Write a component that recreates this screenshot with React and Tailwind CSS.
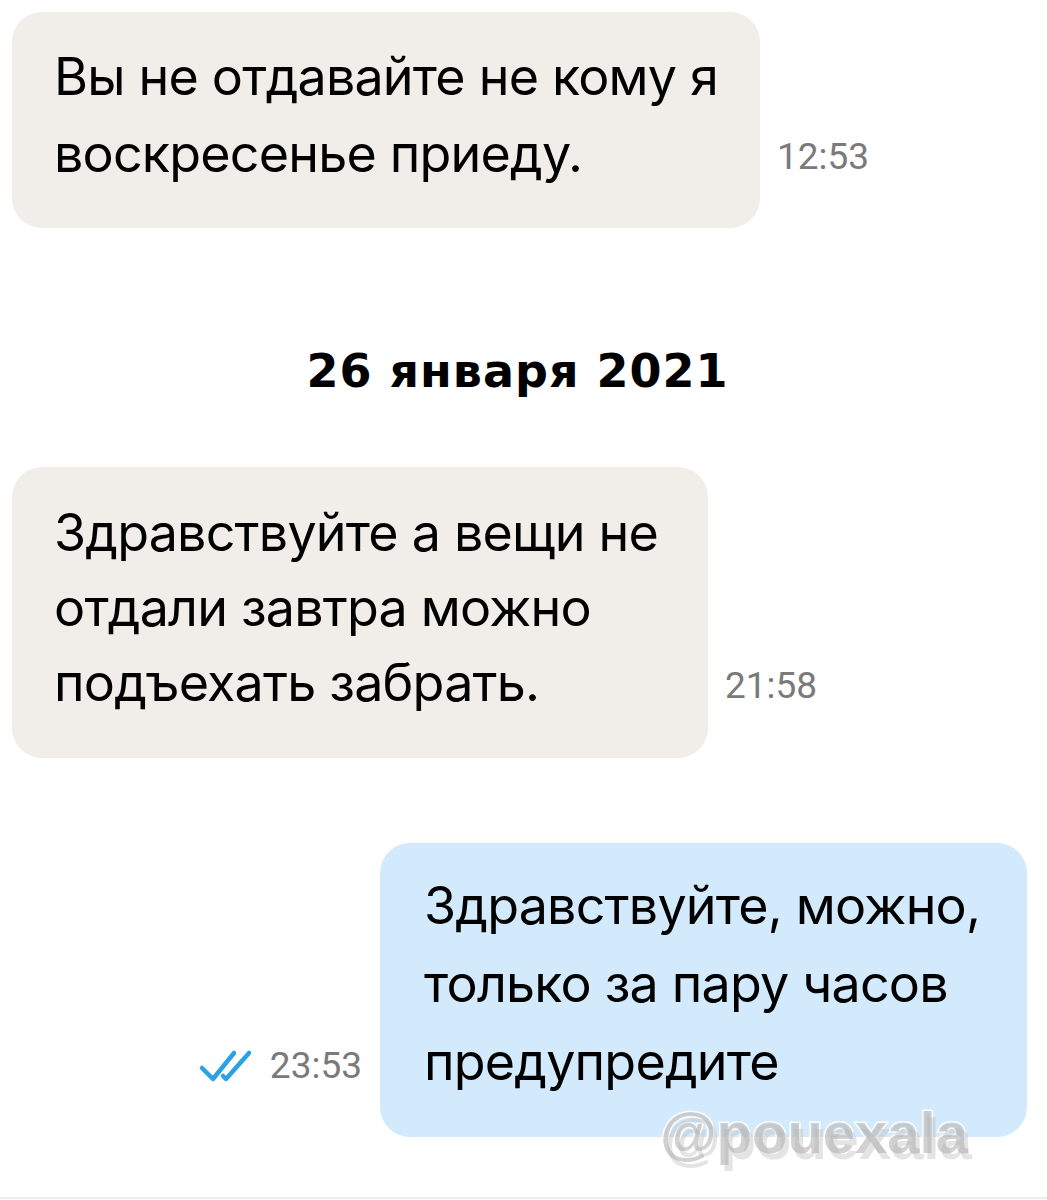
import React from "react";

function Checks() {
  return (
    <svg width="56" height="34" viewBox="0 0 56 34" fill="none" className="mb-[1px]">
      <path d="M4 19 L15 30 L36 4" stroke="#2ba2e6" strokeWidth="4.5" strokeLinecap="round" strokeLinejoin="round" />
      <path d="M25 27 L28 30 L51 4" stroke="#2ba2e6" strokeWidth="4.5" strokeLinecap="round" strokeLinejoin="round" />
    </svg>
  );
}

function Time({ children }) {
  return (
    <span className="font-['Roboto',sans-serif] text-[37px] leading-none text-[#7a7a7a] whitespace-nowrap">
      {children}
    </span>
  );
}

export default function App() {
  return (
    <div className="relative w-[1047px] h-[1200px] bg-white overflow-hidden font-['Inter',sans-serif] text-black">
      <div className="flex flex-col">
        {/* message 1 */}
        <div className="mt-[12px] ml-[12px] flex items-end gap-[17px]">
          <div className="w-[748px] rounded-[30px] bg-[#f1eeea] pl-[42px] pt-[26px] pb-[36px] text-[52px] leading-[77px] tracking-[-0.8px] whitespace-nowrap">
            Вы не отдавайте не кому я
            <br />
            воскресенье приеду.
          </div>
          <div className="pb-[53px]">
            <Time>12:53</Time>
          </div>
        </div>

        {/* date */}
        <div className="mt-[115px] h-[56px] text-center text-[46px] leading-[56px] font-bold pr-[12px] font-['DejaVu_Sans',sans-serif] tracking-[1px]">
          26 января 2021
        </div>

        {/* message 2 */}
        <div className="mt-[68px] ml-[12px] flex items-end gap-[17px]">
          <div className="w-[696px] rounded-[30px] bg-[#f1eeea] pl-[42px] pt-[28px] pb-[38px] text-[52px] leading-[75px] tracking-[-0.8px] whitespace-nowrap">
            Здравствуйте а вещи не
            <br />
            отдали завтра можно
            <br />
            подъехать забрать.
          </div>
          <div className="pb-[54px]">
            <Time>21:58</Time>
          </div>
        </div>

        {/* message 3 */}
        <div className="mt-[85px] flex items-end justify-end pr-[20px] gap-[18px]">
          <div className="flex items-end gap-[16px] pb-[53px]">
            <Checks />
            <Time>23:53</Time>
          </div>
          <div className="w-[647px] rounded-[30px] bg-[#d2eafc] pl-[44px] pt-[24px] pb-[36px] text-[52px] leading-[78px] tracking-[-0.8px] whitespace-nowrap">
            Здравствуйте, можно,
            <br />
            только за пару часов
            <br />
            предупредите
          </div>
        </div>
      </div>

      {/* watermark */}
      <div className="absolute left-[660px] top-[1104px] font-['Liberation_Sans',sans-serif] font-bold text-[58px] leading-none text-[rgba(178,178,178,0.6)] [-webkit-text-stroke:3px_rgba(255,255,255,0.9)] [paint-order:stroke_fill] [text-shadow:4px_6px_0_rgba(195,195,195,0.45)] select-none">
        @pouexala
      </div>

      {/* bottom line */}
      <div className="absolute left-0 right-0 top-[1197px] h-[2px] bg-[#ececec]" />
    </div>
  );
}
